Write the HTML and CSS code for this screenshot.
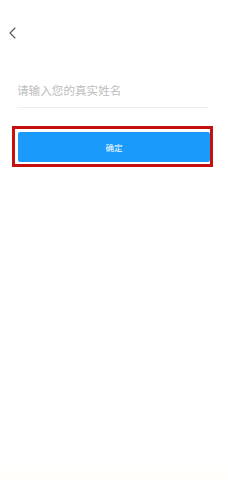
FILE: index.html
```html
<!DOCTYPE html>
<html lang="zh-CN">
<head>
  <meta charset="UTF-8">
  <meta name="viewport" content="width=device-width, initial-scale=1.0">
  <title>实名</title>
  <link rel="stylesheet" href="styles.css">
</head>
<body>
  <div class="nav">
    <svg class="back" width="7" height="12" viewBox="0 0 7 12">
      <path d="M6 1 L1 6 L6 11" fill="none" stroke="#555" stroke-width="1.1" stroke-linecap="round" stroke-linejoin="round"/>
    </svg>
  </div>

  <!-- name input -->
  <div class="field">
    <input type="text" class="name-input" placeholder="请输入您的真实姓名">
  </div>

  <div class="highlight">
    <button class="confirm">确定</button>
  </div>
</body>
</html>
```

FILE: styles.css
```css
* {
  margin: 0;
  padding: 0;
  box-sizing: border-box;
  font-family: "Noto Sans CJK SC", "Noto Sans", sans-serif;
}

body {
  width: 228px;
  height: 480px;
  background: linear-gradient(#fff 96%, #fffefa);
}

.nav {
  padding: 27px 0 0 9px;
  height: 38px;
}

.back {
  display: block;
}

.field {
  margin: 44px 20px 0 17px;
  padding-bottom: 8px;
  border-bottom: 1px solid #eeeeee;
}

.name-input {
  display: block;
  width: 100%;
  border: none;
  outline: none;
  font-size: 11.6px;
  line-height: 17px;
  height: 17px;
  color: #333;
  background: transparent;
}

.name-input::placeholder {
  color: #bdbdbd;
}

/* red highlight round the button */
.highlight {
  margin: 18px 15px 0 12px;
  border: 3px solid #c4110f;
  padding: 3px 0 2px 3px;
}

.confirm {
  display: block;
  width: 100%;
  height: 30px;
  background-color: #1a9bfc;
  color: white;
  border: none;
  border-radius: 2px;
  font-size: 8.5px;
}
```
